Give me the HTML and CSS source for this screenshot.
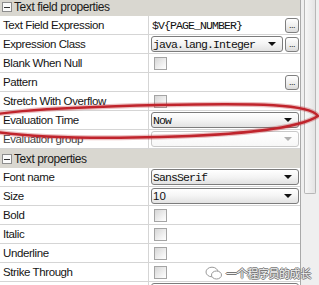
FILE: index.html
```html
<!doctype html>
<html lang="en">
<head>
    <meta charset="utf-8">
    <title>Properties</title>
    <link rel="stylesheet" href="styles.css">
</head>
<body>
<div class="panel">
    <div class="sheet">
        <div class="section"><span class="toggle"></span>Text field properties</div>
        <div class="row">
            <div class="name">Text Field Expression</div>
            <div class="value"><span class="expr">$V{PAGE_NUMBER}</span><div class="dots">...</div></div>
        </div>
        <div class="row">
            <div class="name">Expression Class</div>
            <div class="value"><div class="combo"><span>java.lang.Integer</span><i class="arrow"></i></div><div class="dots">...</div></div>
        </div>
        <div class="row">
            <div class="name">Blank When Null</div>
            <div class="value"><span class="check"></span></div>
        </div>
        <div class="row">
            <div class="name">Pattern</div>
            <div class="value"><span class="expr"></span><div class="dots">...</div></div>
        </div>
        <div class="row">
            <div class="name">Stretch With Overflow</div>
            <div class="value"><span class="check"></span></div>
        </div>
        <div class="row">
            <div class="name">Evaluation Time</div>
            <div class="value"><div class="combo"><span>Now</span><i class="arrow"></i></div></div>
        </div>
        <div class="row">
            <div class="name dim">Evaluation group</div>
            <div class="value"><div class="combo off"><span></span><i class="arrow"></i></div></div>
        </div>

        <div class="section"><span class="toggle"></span>Text properties</div>
        <div class="row">
            <div class="name">Font name</div>
            <div class="value"><div class="combo"><span>SansSerif</span><i class="arrow"></i></div></div>
        </div>
        <div class="row">
            <div class="name">Size</div>
            <div class="value"><div class="combo"><span class="num">10</span><i class="arrow"></i></div></div>
        </div>
        <div class="row">
            <div class="name">Bold</div>
            <div class="value"><span class="check"></span></div>
        </div>
        <div class="row">
            <div class="name">Italic</div>
            <div class="value"><span class="check"></span></div>
        </div>
        <div class="row">
            <div class="name">Underline</div>
            <div class="value"><span class="check"></span></div>
        </div>
        <div class="row">
            <div class="name">Strike Through</div>
            <div class="value"><span class="check"></span></div>
        </div>
        <div class="row">
            <div class="name"></div>
            <div class="value"><div class="combo"><span></span><i class="arrow"></i></div></div>
        </div>
    </div>

    <div class="scrollbar"><div class="thumb"></div></div>

    <!-- red marker drawn over the sheet -->
    <svg class="mark" width="319" height="285" viewBox="0 0 319 285">
        <path d="M -40 124 C -20 112, 40 108, 160 105 C 260 103, 310 104, 318 116 C 300 128, 240 135, 160 137 C 80 139, 0 138, -40 124 Z"
              fill="none" stroke="rgba(190,40,45,0.3)" stroke-width="5"/>
        <path d="M -40 124 C -20 112, 40 108, 160 105 C 260 103, 310 104, 318 116 C 300 128, 240 135, 160 137 C 80 139, 0 138, -40 124 Z"
              fill="none" stroke="#c0242c" stroke-width="2.4"/>
    </svg>

    <div class="watermark">
        <svg width="18" height="15" viewBox="0 0 18 15">
            <ellipse cx="7" cy="6" rx="6" ry="4.8" fill="none" stroke="#9a9a9a" stroke-width="1"/>
            <ellipse cx="11.5" cy="9" rx="5" ry="4" fill="#fff" stroke="#9a9a9a" stroke-width="1"/>
        </svg>
        <span>一个程序员的成长</span>
    </div>
</div>
</body>
</html>
```

FILE: styles.css
```css
body {
    margin: 0;
    background: #fff;
    font-family: "Liberation Sans", Arial, sans-serif;
    font-size: 11.5px;
    color: #151515;
}

.panel {
    position: relative;
    display: flex;
    width: 319px;
    height: 285px;
    overflow: hidden;
}

.sheet {
    width: 300px;
    margin-top: -3px;
}

/* section headers */
.section {
    height: 19px;
    display: flex;
    align-items: center;
    gap: 1px;
    padding-left: 2px;
    padding-top: 1px;
    box-sizing: border-box;
    background: #d9d7d0;
    font-size: 12px;
    letter-spacing: -0.4px;
    color: #1a1a1a;
}

.toggle {
    width: 8px;
    height: 8px;
    margin-right: 1px;
    border: 1px solid #8d8d8d;
    background: #fafafa;
    display: flex;
    align-items: center;
    justify-content: center;
}

.toggle::before {
    content: "";
    width: 6px;
    height: 1px;
    background: #333;
}

/* property rows */
.row {
    height: 19px;
    box-sizing: border-box;
    border-bottom: 1px solid #d5d5d5;
    display: grid;
    grid-template-columns: 149px 1fr;
}

.name {
    border-right: 1px solid #d5d5d5;
    padding-left: 3px;
    display: flex;
    align-items: center;
    white-space: nowrap;
    letter-spacing: -0.4px;
}

.name.dim {
    color: #444;
}

.value {
    display: flex;
    align-items: center;
    gap: 2px;
    padding: 0 1px 0 2px;
    min-width: 0;
}

.expr {
    flex: 1;
    margin-left: 1px;
    font-family: "Liberation Mono", "Courier New", monospace;
    font-size: 11.5px;
    letter-spacing: -0.9px;
    color: #111;
}

.combo {
    flex: 1;
    height: 16px;
    box-sizing: border-box;
    border: 1px solid #7c7c7c;
    border-radius: 3px;
    background: linear-gradient(#ffffff, #f4f4f4 50%, #e2e2e2);
    display: flex;
    align-items: center;
    justify-content: space-between;
    padding: 0 6px 0 1px;
    font-family: "Liberation Mono", "Courier New", monospace;
    font-size: 11.5px;
    letter-spacing: -0.9px;
    color: #111;
}

.combo .num {
    font-family: "Liberation Sans", Arial, sans-serif;
    font-size: 11.5px;
    letter-spacing: 0;
}

.arrow {
    width: 0;
    height: 0;
    border-left: 4px solid transparent;
    border-right: 4px solid transparent;
    border-top: 4px solid #111;
}

.combo.off {
    border-color: #c9c9c9;
    background: linear-gradient(#ffffff, #f7f7f7);
}

.combo.off .arrow {
    border-top-color: #b0b0b0;
}

.dots {
    width: 14px;
    height: 15px;
    box-sizing: border-box;
    border: 1px solid #7f7f7f;
    border-radius: 3px;
    background: linear-gradient(#ffffff, #ececec 60%, #dadada);
    display: flex;
    align-items: flex-end;
    justify-content: center;
    padding-bottom: 2px;
    font-size: 9px;
    line-height: 1;
    letter-spacing: -0.5px;
    color: #222;
}

.check {
    width: 13px;
    height: 13px;
    box-sizing: border-box;
    margin-left: 3px;
    border: 1px solid #a4a4a4;
    background: linear-gradient(135deg, #d6d6d6, #f4f4f4 70%, #ffffff);
}

/* scrollbar on the right */
.scrollbar {
    width: 19px;
    box-sizing: border-box;
    border-left: 1px solid #a9a9a9;
    background: #efefef;
    padding-left: 3px;
}

.thumb {
    width: 12px;
    height: 194px;
    box-sizing: border-box;
    border: 1px solid #b7b7b7;
    border-top: none;
    border-radius: 0 0 2px 2px;
    background: linear-gradient(to right, #f7f7f7, #e4e4e4);
}

.mark {
    position: absolute;
    top: 0;
    left: 0;
    pointer-events: none;
}

.watermark {
    position: absolute;
    left: 205px;
    top: 265px;
    display: flex;
    align-items: center;
    gap: 3px;
    font-family: "Noto Sans CJK SC", sans-serif;
    font-size: 11px;
    letter-spacing: -0.4px;
    color: #f2f2f2;
    text-shadow: 1px 0 0 #777, -1px 0 0 #777, 0 1px 0 #777, 0 -1px 0 #777;
}
```
